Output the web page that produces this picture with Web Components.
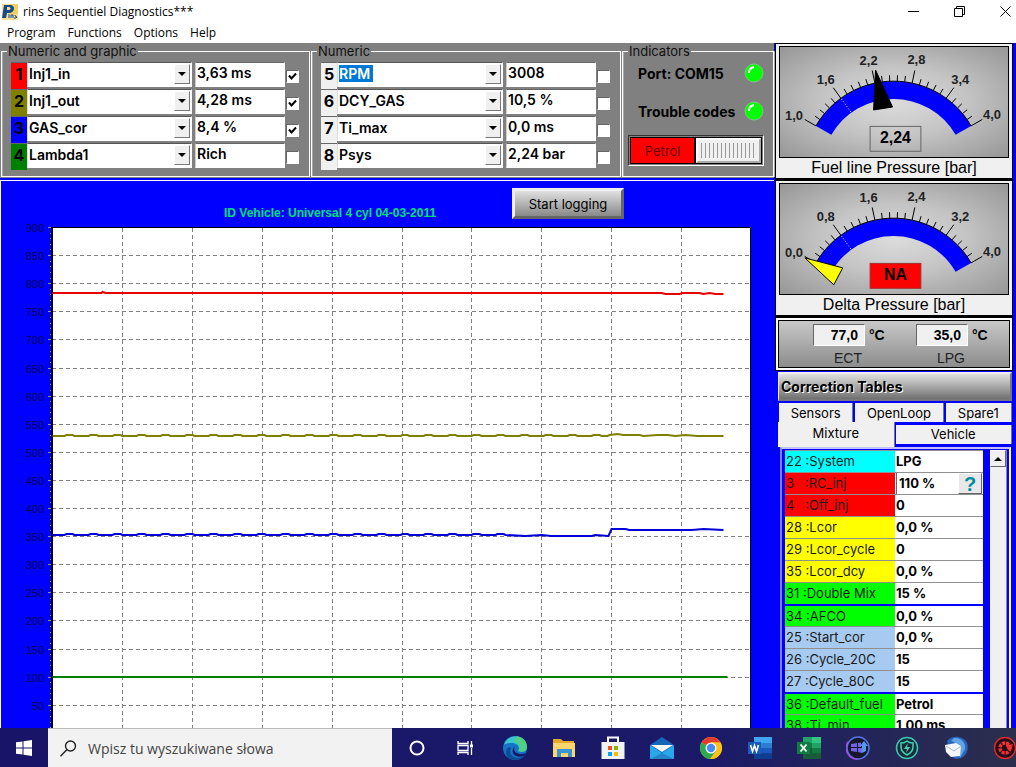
<!DOCTYPE html>
<html lang="en">
<head>
<meta charset="utf-8">
<title>rins Sequentiel Diagnostics***</title>
<style>
  :root {
    --ui-font: Inter, 'Liberation Sans', sans-serif;
    --gauge-font: 'Liberation Sans', Arial, sans-serif;
    --shell-font: 'Open Sans', 'Noto Sans', sans-serif;
    --blue: #0000ff;
    --panel: #808080;
    --face: #f0f0f0;
  }
  body {
    margin: 0;
    height: 100vh;
    overflow: hidden;
    background: var(--blue);
    font-family: var(--ui-font);
    font-size: 13px;
    color: #000;
  }
</style>
</head>
<body>
<diag-app></diag-app>

<script>
/* Base class: every element renders styles() and template() in its shadow root */
class BaseElement extends HTMLElement {
  constructor() {
    super();
    this.attachShadow({ mode: 'open' });
  }

  connectedCallback() {
    this.shadowRoot.innerHTML = `
      <style>
        * { box-sizing: border-box; }
        button, input, select { font: inherit; color: inherit; margin: 0; padding: 0; border-radius: 0; outline: none; }
        ${this.styles()}
      </style>
      ${this.template()}
    `;
    this.setup();
  }

  styles() { return ''; }
  template() { return ''; }
  setup() {}
}

/* Title bar and menu */
class WindowHeader extends BaseElement {
  styles() {
    return `
      :host { display: block; background: #fff; font-family: var(--shell-font); font-size: 12px; }
      .title { display: flex; align-items: center; height: 23px; gap: 5px; padding-left: 2px; }
      .title span { flex: 1; }
      .controls { display: flex; }
      .controls button { width: 46px; height: 22px; border: 0; background: none; display: grid; place-items: center; }
      .controls button:last-child { width: 34px; padding-left: 12px; }
      nav { display: flex; gap: 12px; height: 20px; padding: 0 7px; }
      nav button { border: 0; background: none; line-height: 20px; }
    `;
  }

  template() {
    return `
      <div class="title">
        <svg width="16" height="16" viewBox="0 0 16 16">
          <rect width="16" height="16" fill="#f3df9c"/>
          <path d="M8 0h8v10L8 11z" fill="#f6cf62"/>
          <path d="M2 1h6c6 0 5 8-1 8H5l-1 5H0z" fill="#174a86"/>
          <path d="M5 3h2c2 0 2 3 0 3H5z" fill="#f3df9c"/>
          <path d="M7 10v4M9 14v-3h2v3M13 11v1l2 1-1 1h-2" stroke="#174a86" fill="none"/>
        </svg>
        <span>rins Sequentiel Diagnostics***</span>
        <div class="controls">
          <button aria-label="Minimize"><svg width="11" height="11"><path d="M0 5.500h11" stroke="#000"/></svg></button>
          <button aria-label="Restore"><svg width="11" height="11" fill="none" stroke="#000"><path d="M.5 2.500h8v8h-8zM2.500 2.500v-2h8v8h-2"/></svg></button>
          <button aria-label="Close"><svg width="11" height="11"><path d="M.5 .5l10 10M10.500 .5l-10 10" stroke="#000"/></svg></button>
        </div>
      </div>
      <nav>
        <button>Program</button><button>Functions</button><button>Options</button><button>Help</button>
      </nav>
    `;
  }
}

/* Group box: label attribute in the border, content in the slot */
class GroupBox extends BaseElement {
  styles() {
    return `
      :host { display: block; padding-left: 1px; background: var(--panel); }
      fieldset { margin: 0; padding: 0; min-width: 0; height: 134px; border: 1px solid #fff; box-shadow: 1px 0 0 #a8a8a8, inset 1px 0 0 #a8a8a8; }
      legend { margin-left: 5px; padding: 0 1px; height: 16px; line-height: 16px; color: #111; }
    `;
  }

  template() {
    return `<fieldset><legend>${this.getAttribute('label')}</legend><slot></slot></fieldset>`;
  }
}

/* One measured signal: channel number, signal drop-down, value and tick box */
class SignalRow extends BaseElement {
  styles() {
    const color = this.getAttribute('color') || '#f0f0f0';
    return `
      :host { display: grid; grid-template-columns: 16px minmax(0, 1fr) 91px 13px; height: 27px; font-size: 14px; font-weight: 600; }
      .num { background: ${color}; font-size: 16px; font-weight: 700; line-height: 22px; text-align: center; border-top: 1px solid #666; }
      .combo { display: grid; height: 25px; margin-right: 3px; background: #fff; border: 1px solid #555; border-color: #555 #fff #fff #ddd; }
      .combo > * { grid-area: 1 / 1; }
      select { appearance: none; border: 0; height: 21px; width: 100%; padding-left: 1px; background: transparent; }
      .picked select { color: #fff; background: linear-gradient(#0078d7, #0078d7) 1px 2px / 34px 17px no-repeat; }
      .picked option { color: #000; }
      .arrow { justify-self: end; width: 16px; height: 20px; margin: 1px; background: #f0f0f0; border: 1px solid; border-color: #fff #777 #777 #fff; display: grid; place-items: center; pointer-events: none; }
      .value { width: 90px; height: 25px; padding: 0 0 4px 1px; border: 1px solid; border-color: #666 #fff #fff #ccc; background: #fff; }
      .tick { appearance: none; width: 13px; height: 13px; margin-top: 8px; border: 1px solid; border-color: #666 #fff #fff #666; background: #fff; }
      .tick:checked { background: #fff url("data:image/svg+xml,%3Csvg xmlns='http://www.w3.org/2000/svg' width='11' height='11'%3E%3Cpath d='M2 4.500l2.500 3L9 2.500' fill='none' stroke='black' stroke-width='2'/%3E%3C/svg%3E"); }
    `;
  }

  template() {
    const num = this.getAttribute('num');
    const name = this.getAttribute('name');
    return `
      <label class="num" for="signal">${num}</label>
      <div class="combo ${this.hasAttribute('picked') ? 'picked' : ''}">
        <select id="signal"><option>${name}</option></select>
        <span class="arrow"><svg width="8" height="4"><path d="M0 0h8L4 4z"/></svg></span>
      </div>
      <input class="value" readonly aria-label="${name} value" value="${this.getAttribute('value')}">
      <input class="tick" type="checkbox" aria-label="Show ${name}" ${this.hasAttribute('checked') ? 'checked' : ''}>
    `;
  }
}

class SignalList extends BaseElement {
  styles() {
    return `:host { display: block; padding: 3px 10px 0 9px; }`;
  }
  template() { return `<slot></slot>`; }
}

/* Port and trouble code lamps with the fuel switch */
class StatusIndicators extends BaseElement {
  styles() {
    return `
      :host { display: block; padding: 3px 9px 0 5px; }
      .lamp { display: flex; justify-content: space-between; align-items: center; height: 38px; padding-left: 10px; font-size: 14px; font-weight: 700; white-space: nowrap; }
      .lamp:first-of-type { height: 22px; margin-bottom: 8px; }
      button { display: flex; width: 136px; height: 31px; margin-top: 5px; padding: 2px; border: 1px solid; border-color: #333 #fff #fff #333; outline: 1px solid #000; outline-offset: -3px; background: #808080; }
      .fuel { flex: 1; height: 25px; line-height: 26px; background: #f00; color: #600; border-right: 2px solid #000; }
      .knob { width: 65px; height: 25px; border: 2px solid; border-color: #fff #aaa #aaa #fff; background: #f0f0f0; padding: 3px; }
      .knob i { display: block; height: 15px; background: repeating-linear-gradient(90deg, #999 0 1px, #f0f0f0 1px 4px); }
    `;
  }

  template() {
    const led = `
      <svg width="20" height="20" viewBox="0 0 20 20">
        <circle cx="10" cy="10" r="9" fill="#00ff00" stroke="#7bc67b"/>
        <path d="M5 10q0-5 5-6" fill="none" stroke="#fff" stroke-width="2"/>
      </svg>`;
    return `
      <div class="lamp">Port: COM15 ${led}</div>
      <div class="lamp">Trouble codes ${led}</div>
      <button><span class="fuel">Petrol</span><span class="knob"><i></i></span></button>
    `;
  }
}

/* Signal history chart. Values run from 900 at the top, 10 columns wide */
class SignalChart extends BaseElement {
  styles() {
    return `
      :host { display: flex; flex-direction: column; min-height: 0; border: solid #fff; border-width: 1px 0 0 1px; background: var(--blue); }
      header { display: flex; align-items: flex-start; gap: 78px; height: 38px; padding: 7px 0 0 223px; }
      h2 { margin: 0; padding-top: 17px; font: bold 12px/16px var(--gauge-font); color: #00e070; white-space: nowrap; width: 210px; }
      button { width: 112px; height: 31px; border: 3px solid; border-color: #eee #666 #666 #eee; background: linear-gradient(#e0e0e0, #888); white-space: nowrap; }
      .plot { flex: 1; min-height: 0; overflow: hidden; }
      svg { display: block; width: 100%; height: 100%; font: 11px var(--gauge-font); }
    `;
  }

  template() {
    return `
      <header>
        <h2>ID Vehicle: Universal 4 cyl 04-03-2011</h2>
        <button>Start logging</button>
      </header>
      <div class="plot"><svg></svg></div>
    `;
  }

  setup() {
    this.draw();
    window.addEventListener('resize', () => this.draw());
  }

  draw() {
    const svg = this.shadowRoot.querySelector('svg');
    const left = 51;
    const top = 8;
    const width = svg.clientWidth - left - 23;
    const scale = 0.562;
    const y = value => top + Math.round((900 - value) * scale) + 0.5;
    const x = part => left + Math.round(width * part) + 0.5;
    let out = `<rect x="${left}" y="${top}" width="${width}" height="600" fill="#fff"/>`;

    for (let i = 1; i < 10; i++) {
      out += `<path d="M${x(i / 10)} ${top + 1}V600" stroke="#808080" stroke-dasharray="4 3"/>`;
    }
    for (let v = 900; v > 0; v -= 10) {
      const major = v % 50 === 0;
      out += `<path d="M${left - (major ? 4 : 2)} ${y(v)}h${major ? 4 : 2}" stroke="#9090c0"/>`;
      if (major) {
        out += `<text x="43" y="${y(v) + 4}" text-anchor="end" fill="#000050">${v}</text>`;
        if (v < 900) out += `<path d="M${left} ${y(v)}H${left + width}" stroke="#808080" stroke-dasharray="4 3"/>`;
      }
    }
    out += `<path d="M${left + 0.5} 600V${top + 0.5}H${left + width - 0.5}V600" fill="none" stroke="#000"/>`;
    out += `<path d="M${left} 600V${top}" stroke="#000" stroke-width="2"/>`;

    SignalChart.series.forEach(({ color, points }) => {
      const list = points.map(([px, v]) => `${x(px / 700)},${y(v) + 0.5}`).join(' ');
      out += `<polyline points="${list}" fill="none" stroke="${color}" stroke-width="2"/>`;
    });
    svg.innerHTML = out;
  }
}

/* Signal that wobbles slightly around a base value */
function wobble(from, to, base, size) {
  const points = [];
  for (let i = from; i < to; i += 24) {
    points.push([i, base], [i + 12, base], [i + 14, base + size], [i + 20, base + size], [i + 22, base]);
  }
  return points;
}

SignalChart.series = [
  { color: '#e80000', points: [[0, 784], [49, 784], [50, 786], [53, 784], [610, 784], [614, 782], [628, 782], [631, 784], [648, 784], [652, 782], [658, 784], [664, 782], [672, 782]] },
  { color: '#808000', points: [...wobble(0, 540, 530, 2), [556, 530], [558, 531], [566, 534], [572, 532], [588, 532], [592, 530], [606, 532], [616, 532], [624, 530], [634, 532], [646, 530], [672, 530]] },
  { color: '#0000d8', points: [...wobble(0, 450, 354, 2), [474, 352], [490, 354], [500, 352], [540, 352], [544, 353], [557, 352], [560, 365], [574, 365], [578, 363], [640, 363], [652, 365], [672, 363]] },
  { color: '#008000', points: [[0, 101], [676, 101]] }
];

/* Half-round pressure gauge: labels, reading and needle come from attributes */
class PressureGauge extends BaseElement {
  styles() {
    return `
      :host { display: block; padding: 2px 3px 0; border: 1px solid #000; border-bottom-width: 2px; background: var(--face); font-family: var(--gauge-font); }
      .face { border: 1px solid #000; background: radial-gradient(ellipse at 50% 50%, #dcdcdc 0%, #c4c4c4 45%, #969696 100%); }
      svg { display: block; width: 100%; height: 110px; }
      text { text-anchor: middle; font-size: 13px; font-weight: bold; fill: #222; }
      .reading { font-size: 16px; fill: #000; }
      p { margin: 0; text-align: center; font-size: 16px; line-height: 20px; }
    `;
  }

  template() {
    const cx = 114;
    const cy = 124;
    const at = (deg, r) => {
      const a = deg * Math.PI / 180;
      return `${(cx + r * Math.sin(a)).toFixed(1)} ${(cy - r * Math.cos(a)).toFixed(1)}`;
    };
    const labels = this.getAttribute('scale').split(' ');
    const places = [[14, 73], [46, 37], [89, 18], [137, 17], [181, 37], [213, 72]];
    const alarm = this.hasAttribute('alarm');
    let ticks = '';
    for (let i = 0; i <= 25; i++) {
      const deg = -60 + i * 4.8;
      ticks += `M${at(deg, 90)}L${at(deg, i % 5 ? 96 : 103)}`;
    }

    return `
      <div class="face">
        <svg viewBox="0 0 229 110">
          <path d="M${at(-60, 90)}A90 90 0 0 1 ${at(60, 90)}L${at(60, 72)}A72 72 0 0 0 ${at(-60, 72)}z" fill="#0000ff"/>
          <path d="${ticks}M${at(-60, 90)}A90 90 0 0 1 ${at(60, 90)}" fill="none" stroke="#000"/>
          <path d="M${at(-36, 73)}L${at(-36, 90)}" stroke="#fff" stroke-dasharray="1 2"/>
          ${labels.map((label, i) => `<text x="${places[i][0]}" y="${places[i][1]}">${label}</text>`).join('')}
          <rect x="90.500" y="79.500" width="51" height="25" fill="${alarm ? '#ff0000' : 'none'}" stroke="${alarm ? '#a03030' : '#666'}"/>
          <text class="reading" x="116" y="96">${this.getAttribute('reading')}</text>
          <path d="${this.getAttribute('needle')}" fill="${alarm ? '#ffff00' : '#000'}" stroke="#000"/>
        </svg>
      </div>
      <p><slot></slot></p>
    `;
  }
}

/* Coolant and LPG temperature */
class TemperaturePanel extends BaseElement {
  styles() {
    return `
      :host { display: block; padding: 2px; border: 1px solid #000; background: #fff; font-family: var(--gauge-font); }
      .face { display: flex; gap: 21px; height: 48px; padding: 3px 0 0 34px; border: 1px solid #000; background: linear-gradient(#c8c8c8, #8c8c8c); }
      .temp { display: grid; grid-template-columns: 52px 26px; column-gap: 4px; align-content: start; }
      input { width: 52px; height: 22px; padding-right: 6px; text-align: right; font-size: 14px; font-weight: bold; background: #f0f0f0; border: 1px solid; border-color: #666 #fff #fff #666; }
      span { font-size: 14px; font-weight: bold; line-height: 22px; }
      label { width: 70px; text-align: center; line-height: 24px; font-size: 14px; color: #222; }
    `;
  }

  template() {
    return `
      <div class="face">
        <div class="temp"><input id="ect" readonly value="77,0"><span>°C</span><label for="ect">ECT</label></div>
        <div class="temp"><input id="lpg" readonly value="35,0"><span>°C</span><label for="lpg">LPG</label></div>
      </div>
    `;
  }
}

class CorrectionTables extends BaseElement {
  styles() {
    return `
      :host { display: flex; flex-direction: column; min-height: 0; padding: 1px 1px 0 3px; }
      h3 { flex: none; margin: 0; height: 29px; line-height: 25px; padding-left: 2px; font-size: 14px; font-weight: 700; text-shadow: 1px 1px 0 #fff; border: 2px solid; border-color: #eee #777 #777 #eee; border-left-width: 1px; background: linear-gradient(#e0e0e0, #707070); }
      .tabs { flex: none; display: flex; gap: 2px; }
      .tabs button { border: 0; border-right: 1px solid #777; background: #f0f0f0; height: 19px; }
      .upper { margin: 2px 0 0 1px; }
      .upper button:nth-child(1) { flex: 74; }
      .upper button:nth-child(2) { flex: 88; }
      .upper button:nth-child(3) { flex: 66; }
      .lower { gap: 1px; }
      .lower button { flex: 1; margin-top: 3px; line-height: 19px; }
      .lower button.active { height: 25px; margin-top: 0; padding-bottom: 3px; }
      .frame { flex: 1; min-height: 0; display: flex; gap: 7px; overflow: hidden; margin: 0 1px 0 2px; padding: 1px 2px 0 3px; border: 2px solid; border-color: #c0c0ff #fff #fff #8080ff; border-bottom: 0; }
      .list { flex: 1; min-width: 0; }
      table { width: 100%; border-collapse: collapse; table-layout: fixed; background: #fff; }
      tr { height: 22px; }
      th, td { padding: 0 1px; height: 22px; line-height: 20px; text-align: left; vertical-align: top; border-top: 1px solid #909090; white-space: nowrap; overflow: hidden; }
      th { width: 110px; font-weight: 400; color: #1a1a1a; }
      td { font-weight: 700; }
      tr.group th, tr.group td { border-top: 2px solid var(--blue); }
      .editor { display: flex; height: 21px; }
      .editor input { flex: 1; min-width: 0; padding: 0 0 2px 2px; border: 0; border-left: 1px solid #666; }
      .editor button { width: 24px; border: 1px solid; border-color: #fff #666 #666 #fff; background: #e8e8e8; font: bold 20px/18px var(--gauge-font); color: #008ba0; }
      .scroll { width: 17px; background: #f0f0f0; border-right: 1px solid #888; }
      .scroll button { width: 16px; height: 17px; background: #f0f0f0; border: 1px solid; border-color: #fff #666 #666 #fff; display: grid; place-items: center; }
    `;
  }

  template() {
    return `
      <h3>Correction Tables</h3>
      <div class="tabs upper"><button>Sensors</button><button>OpenLoop</button><button>Spare1</button></div>
      <div class="tabs lower"><button class="active">Mixture</button><button>Vehicle</button></div>
      <div class="frame">
        <div class="list">
          <table><tbody>${CorrectionTables.rows.map(row => this.row(row)).join('')}</tbody></table>
        </div>
        <div class="scroll"><button aria-label="Scroll up"><svg width="8" height="4"><path d="M0 4h8L4 0z"/></svg></button></div>
      </div>
    `;
  }

  row([num, name, value, color, kind]) {
    const cell = kind === 'edit'
      ? `<div class="editor"><input aria-label="${name}" value="${value}"><button>?</button></div>`
      : value;
    // single-digit numbers are padded so that the names line up
    const label = num.padEnd(num.length < 2 ? 4 : 3, '\u00a0');
    return `
      <tr class="${kind || ''}">
        <th scope="row" style="background:${color}">${label}:${name}</th>
        <td>${cell}</td>
      </tr>`;
  }
}

CorrectionTables.rows = [
  ['22', 'System', 'LPG', '#00ffff'],
  ['3', 'RC_inj', '110 %', '#ff0000', 'edit'],
  ['4', 'Off_inj', '0', '#ff0000'],
  ['28', 'Lcor', '0,0 %', '#ffff00'],
  ['29', 'Lcor_cycle', '0', '#ffff00'],
  ['35', 'Lcor_dcy', '0,0 %', '#ffff00'],
  ['31', 'Double Mix', '15 %', '#00ff00'],
  ['34', 'AFCO', '0,0 %', '#00ff00', 'group'],
  ['25', 'Start_cor', '0,0 %', '#a6caf0'],
  ['26', 'Cycle_20C', '15', '#a6caf0'],
  ['27', 'Cycle_80C', '15', '#a6caf0'],
  ['36', 'Default_fuel', 'Petrol', '#00ff00', 'group'],
  ['38', 'Ti_min', '1,00 ms', '#00ff00']
];

/* Desktop task bar */
class TaskBar extends BaseElement {
  styles() {
    return `
      :host { display: grid; grid-template-columns: 48px minmax(0, 344fr) minmax(0, 624fr); height: 39px; overflow: hidden; background: linear-gradient(90deg, #181468, #1b1a68 70%, #2b2f4c); font-family: var(--shell-font); }
      button { flex: none; width: 49px; border: 0; background: none; display: grid; place-items: center; }
      .start { width: 48px; }
      label { display: flex; align-items: center; gap: 11px; padding-left: 12px; background: #f2f2f2; border-top: 1px solid #bbb; }
      input { flex: 1; min-width: 0; border: 0; background: none; font-size: 14px; }
      input::placeholder { color: #444; opacity: 1; }
      .apps { display: flex; overflow: hidden; }
    `;
  }

  template() {
    return `
      <button class="start" aria-label="Start">
        <svg width="16" height="16" viewBox="0 0 16 16" fill="#fff"><path d="M0 2.300L6.500 1.400V7.500H0zM7.500 1.200L16 0V7.500H7.500zM0 8.500H6.500V14.600L0 13.700zM7.500 8.500H16V16L7.500 14.800z"/></svg>
      </button>
      <label>
        <svg width="17" height="17" viewBox="0 0 17 17" fill="none" stroke="#222" stroke-width="1.400"><circle cx="10.500" cy="6" r="5"/><path d="M7 9.500L.5 16.200"/></svg>
        <input type="search" placeholder="Wpisz tu wyszukiwane słowa">
      </label>
      <div class="apps">${TaskBar.apps.map(([name, art]) => `
        <button aria-label="${name}"><svg width="24" height="24" viewBox="0 0 24 24">${art}</svg></button>`).join('')}
      </div>
    `;
  }
}

TaskBar.apps = [
  ['Cortana', '<circle cx="12" cy="12" r="6.500" fill="none" stroke="#fff" stroke-width="2"/>'],
  ['Task view', '<path d="M4 5v2.500h10V5M4 19v-2.500h10V19M4 9.500h10v5H4zM17.500 5v4M17.500 12v7" fill="none" stroke="#fff" stroke-width="1.300"/><path d="M16 8.500h3v3h-3z" fill="#fff"/>'],
  ['Edge', '<circle cx="12" cy="12" r="12" fill="#1474c4"/><path d="M1 9C4-3 23-3 24 11c0 4-4 6-9 4 3-4-1-8-6-8-4 0-7 1-8 2z" fill="#38c6cf"/><path d="M14 .2C21 1 24 6 24 11c0 4-4 6-9 4 3-3 2-8-4-10z" fill="#5ad36a" opacity=".75"/><path d="M8 12c-3 6 3 12 12 9-5 5-17 4-17-5 0-4 3-6 5-4z" fill="#0b4d94"/><path d="M12 10c-3 5 2 10 11 7l-2 3c-9 3-15-4-9-10z" fill="#191868"/>'],
  ['Files', '<path d="M1 3h8l2 2h11v16H1z" fill="#e5a82a"/><path d="M1 7h22v14H1z" fill="#fbd66d"/><path d="M5 21v-8h15v8h-4v-4H9v4z" fill="#3b93d5"/>'],
  ['Store', '<path d="M7 7V1.500h10V7" fill="none" stroke="#fff" stroke-width="2"/><path d="M.5 6h23v17h-23z" fill="#f2f2f2"/><path d="M7 10h4v4H7z" fill="#f25022"/><path d="M13 10h4v4h-4z" fill="#7fba00"/><path d="M7 16h4v4H7z" fill="#00a4ef"/><path d="M13 16h4v4h-4z" fill="#ffb900"/>'],
  ['Mail', '<path d="M0 9L12 1l12 8v14H0z" fill="#1466b8"/><path d="M1 9h22L12 16z" fill="#f7f7f7"/><path d="M0 9l12 8 12-8v14H0z" fill="#28a8ea"/><path d="M0 23l12-6 12 6z" fill="#2484cc"/>'],
  ['Chrome', '<circle cx="12" cy="12" r="11" fill="#fbc116"/><path d="M12 12L2.500 6.500A11 11 0 0 1 21.500 6.500H12z" fill="#e33b2e"/><path d="M12 12L2.500 6.500A11 11 0 0 0 11 23l6-8z" fill="#2da94f"/><path d="M12 6.500h9.500A11 11 0 0 1 11 23l6-8z" fill="#fbc116"/><circle cx="12" cy="12" r="5.500" fill="#fff"/><circle cx="12" cy="12" r="4.200" fill="#4a8af4"/>'],
  ['Word', '<path d="M6 1h18v22H6z" fill="#41a5ee"/><path d="M6 7h18v6H6z" fill="#2b7cd3"/><path d="M6 12h18v6H6z" fill="#185abd"/><path d="M6 17h18v6H6z" fill="#103f91"/><path d="M0 6h13v12H0z" fill="#185abd"/><path d="M2.500 9l2 6.500 2-6 2 6 2-6.500" fill="none" stroke="#fff" stroke-width="1.600"/>'],
  ['Excel', '<path d="M6 1h18v22H6z" fill="#21a366"/><path d="M15 1h9v6h-9z" fill="#33c481"/><path d="M6 7h9v5H6z" fill="#107c41"/><path d="M6 12h18v11H6z" fill="#185c37"/><path d="M15 12h9v5h-9z" fill="#107c41"/><path d="M0 6h13v12H0z" fill="#107c41"/><path d="M3.500 8.500l6 7M9.500 8.500l-6 7" stroke="#fff" stroke-width="1.800"/>'],
  ['Driver tool', '<circle cx="12" cy="12" r="11" fill="#17172c" stroke="#5673e8" stroke-width="1.500"/><path d="M2 6A11 11 0 0 0 12 23" fill="none" stroke="#9b50df" stroke-width="1.500"/><path d="M5 8l6-1v4H5zM12 7l3-.5V11h-3zM5 12h6v4l-6-1zM12 12h4v5l-4-1z" fill="#7264e4"/><path d="M16 17V10h-2l4-5 4 5h-2v5z" fill="#519aed"/>'],
  ['Security tool', '<circle cx="12" cy="12" r="10.500" fill="#172b3a" stroke="#39c5b5" stroke-width="1.500"/><path d="M6 7q4 0 6-2 2 2 6 2v4q0 5-6 8-6-3-6-8z" fill="none" stroke="#42d4b2" stroke-width="1.500"/><path d="M13 7l-4 6h3l-1 4 4-6h-3z" fill="#42d4b2"/>'],
  ['Thunderbird', '<path d="M3 5C8-2 20 0 23 7c3 10-4 16-11 16L6 20z" fill="#2867bd"/><path d="M10 2c7-1 12 5 11 11l-5 9c-1-9 1-14-9-17z" fill="#62a5e5"/><path d="M1 9l11-2 5 3-1 10-9 1-5-5z" fill="#f6f6f8"/><path d="M2 10l8 5 7-5" fill="none" stroke="#a9bad0"/>'],
  ['Game tool', '<circle cx="12" cy="12" r="10.500" fill="#260c18" stroke="#e02c2d" stroke-width="1.300"/><circle cx="12" cy="12" r="5" fill="none" stroke="#f03030" stroke-width="3.500" stroke-dasharray="3 1"/><path d="M12 12l3-7 1 4 4-1-2 6z" fill="#f03030"/><circle cx="12" cy="12" r="2" fill="#260c18"/>']
];

/* Page frame */
class DiagApp extends BaseElement {
  styles() {
    return `
      :host { display: grid; grid-template-rows: auto minmax(0, 1fr) auto; height: 100vh; }
      main { display: grid; grid-template-columns: minmax(0, 1fr) 238px; column-gap: 1px; min-height: 0; padding-right: 3px; }
      .left, .right { display: flex; flex-direction: column; min-height: 0; }
      .groups { display: grid; grid-template-columns: 310fr 311fr 153fr; height: 137px; background: var(--panel); border-bottom: 2px solid var(--blue); }
      signal-chart, correction-tables { flex: 1; }
    `;
  }

  template() {
    return `
      <window-header></window-header>
      <main>
        <div class="left">
          <div class="groups">
            <group-box label="Numeric and graphic">
              <signal-list>
                <signal-row num="1" name="Inj1_in" value="3,63 ms" color="#ff0000" checked></signal-row>
                <signal-row num="2" name="Inj1_out" value="4,28 ms" color="#808000" checked></signal-row>
                <signal-row num="3" name="GAS_cor" value="8,4 %" color="#0000ff" checked></signal-row>
                <signal-row num="4" name="Lambda1" value="Rich" color="#008000"></signal-row>
              </signal-list>
            </group-box>
            <group-box label="Numeric">
              <signal-list>
                <signal-row num="5" name="RPM" value="3008" picked></signal-row>
                <signal-row num="6" name="DCY_GAS" value="10,5 %"></signal-row>
                <signal-row num="7" name="Ti_max" value="0,0 ms"></signal-row>
                <signal-row num="8" name="Psys" value="2,24 bar"></signal-row>
              </signal-list>
            </group-box>
            <group-box label="Indicators">
              <status-indicators></status-indicators>
            </group-box>
          </div>
          <signal-chart></signal-chart>
        </div>
        <div class="right">
          <pressure-gauge scale="1,0 1,6 2,2 2,8 3,4 4,0" reading="2,24" needle="M96 23L94 63L113 60z">Fuel line Pressure [bar]</pressure-gauge>
          <pressure-gauge scale="0,0 0,8 1,6 2,4 3,2 4,0" reading="NA" needle="M25 74L63 84L54 101z" alarm>Delta Pressure [bar]</pressure-gauge>
          <temperature-panel></temperature-panel>
          <correction-tables></correction-tables>
        </div>
      </main>
      <task-bar></task-bar>
    `;
  }
}

customElements.define('window-header', WindowHeader);
customElements.define('group-box', GroupBox);
customElements.define('signal-row', SignalRow);
customElements.define('signal-list', SignalList);
customElements.define('status-indicators', StatusIndicators);
customElements.define('signal-chart', SignalChart);
customElements.define('pressure-gauge', PressureGauge);
customElements.define('temperature-panel', TemperaturePanel);
customElements.define('correction-tables', CorrectionTables);
customElements.define('task-bar', TaskBar);
customElements.define('diag-app', DiagApp);
</script>
</body>
</html>
